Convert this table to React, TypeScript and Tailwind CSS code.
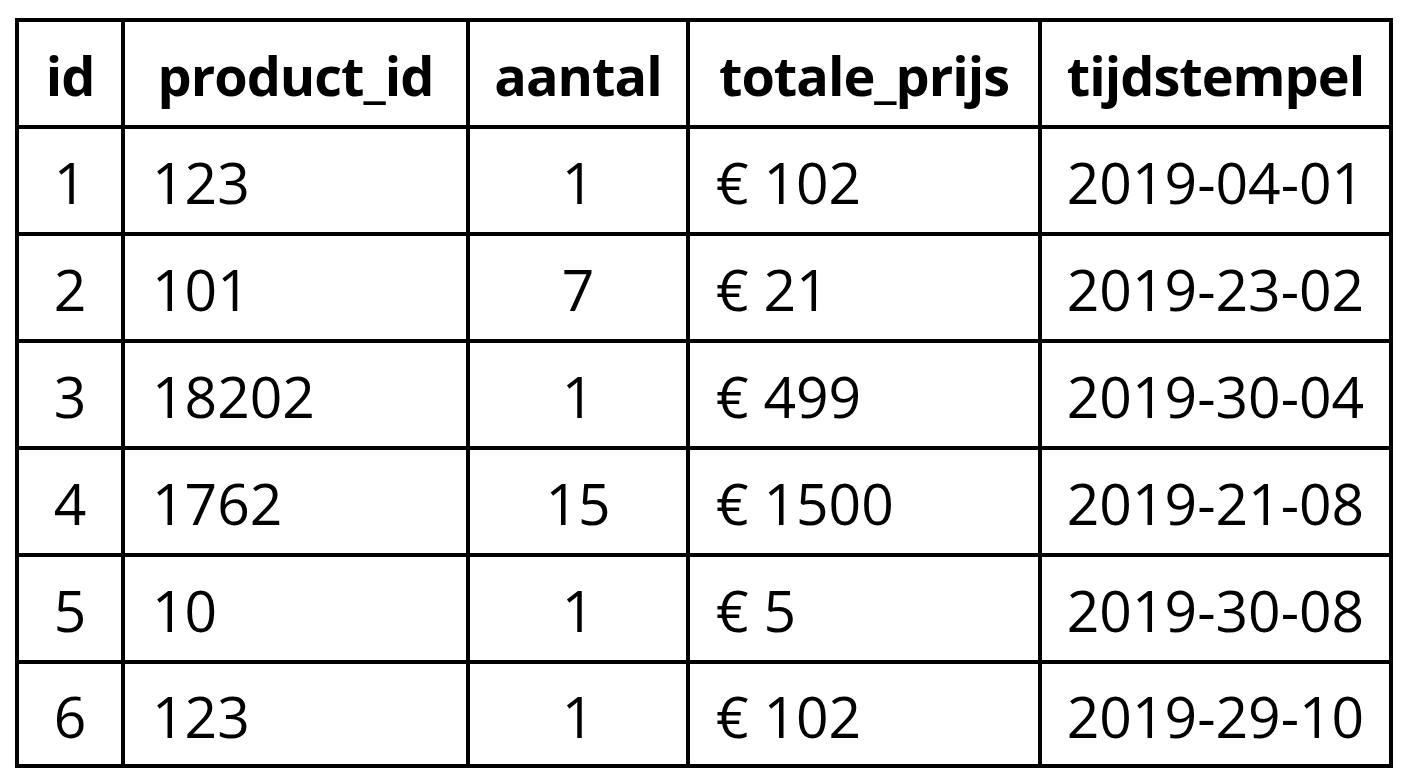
import React from "react";

const rows = [
  ["1", "123", "1", "€ 102", "2019-04-01"],
  ["2", "101", "7", "€ 21", "2019-23-02"],
  ["3", "18202", "1", "€ 499", "2019-30-04"],
  ["4", "1762", "15", "€ 1500", "2019-21-08"],
  ["5", "10", "1", "€ 5", "2019-30-08"],
  ["6", "123", "1", "€ 102", "2019-29-10"],
];

const headers = ["id", "product_id", "aantal", "totale_prijs", "tijdstempel"];

export default function App() {
  return (
    <div
      className="w-[1408px] h-[768px] bg-white pt-[18px] pl-[15px]"
      style={{ fontFamily: '"Open Sans", "Noto Sans", sans-serif' }}
    >
      <div className="grid w-[1378px] grid-cols-[102px_341px_216px_348px_347px] grid-rows-[103px_103px_103px_103px_103px_103px_100px] gap-[4px] border-[4px] border-black bg-black text-black">
        {headers.map((h) => (
          <div
            key={h}
            className="flex items-center justify-center bg-white text-[54px] font-bold leading-none tracking-[-1px]"
          >
            <span className="pt-[2px]">{h}</span>
          </div>
        ))}
        {rows.map((r, i) => (
          <React.Fragment key={i}>
            <div className="flex items-center justify-center bg-white text-[57px] leading-none">
              <span className="pt-[4px]">{r[0]}</span>
            </div>
            <div className="flex items-center bg-white pl-[27px] text-[57px] leading-none">
              <span className="pt-[4px]">{r[1]}</span>
            </div>
            <div className="flex items-center justify-center bg-white text-[57px] leading-none">
              <span className="pt-[4px]">{r[2]}</span>
            </div>
            <div className="flex items-center bg-white pl-[26px] text-[57px] leading-none">
              <span className="pt-[4px]">{r[3]}</span>
            </div>
            <div className="flex items-center justify-center bg-white text-[57px] leading-none">
              <span className="pt-[4px]">{r[4]}</span>
            </div>
          </React.Fragment>
        ))}
      </div>
    </div>
  );
}
